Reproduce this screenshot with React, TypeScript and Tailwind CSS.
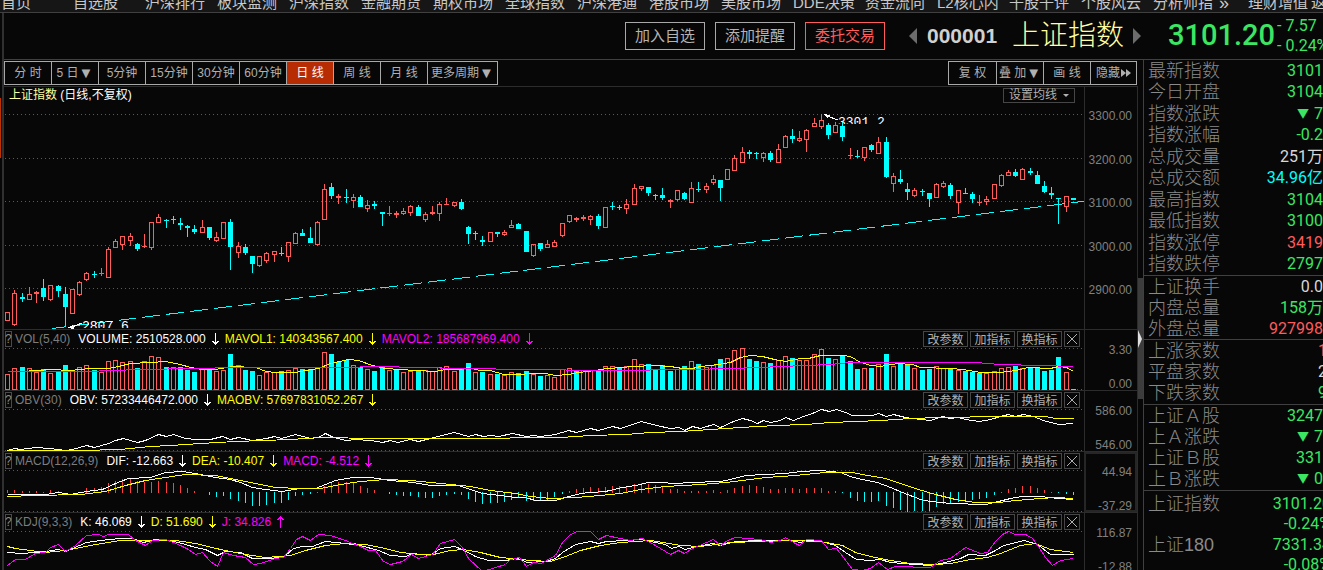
import type { ReactNode } from "react";

const UP = "#ff5c5c";
const DOWN = "#00ffff";

// [rising, high, body top, body bottom, low], as y positions on the chart
const candles: number[][] = [
  [1, 312, 312, 321, 321], [1, 290, 293, 325, 326], [0, 293, 297, 299, 302], [1, 287, 294, 300, 300], [1, 291, 292, 294, 303],
  [0, 279, 288, 297, 301], [1, 285, 285, 300, 301], [0, 285, 286, 291, 297], [0, 287, 294, 307, 327], [1, 289, 289, 314, 314],
  [1, 281, 282, 295, 296], [1, 272, 273, 280, 281], [0, 271, 274, 275, 278], [1, 268, 273, 274, 276], [1, 247, 249, 278, 278],
  [1, 239, 241, 248, 248], [1, 236, 236, 245, 250], [1, 233, 236, 241, 246], [0, 243, 244, 249, 251], [1, 234, 246, 247, 248],
  [1, 222, 222, 248, 250], [1, 214, 217, 223, 223], [0, 219, 220, 221, 228], [0, 216, 219, 220, 224], [0, 218, 223, 225, 230],
  [0, 225, 226, 228, 237], [0, 225, 229, 232, 234], [1, 220, 227, 233, 233], [0, 227, 227, 238, 240], [1, 232, 237, 241, 242],
  [1, 222, 222, 239, 239], [0, 219, 222, 247, 270], [1, 242, 246, 253, 258], [0, 244, 247, 253, 255], [0, 256, 256, 264, 273],
  [1, 256, 256, 266, 267], [1, 252, 253, 261, 263], [1, 251, 251, 255, 262], [0, 247, 253, 254, 256], [1, 242, 242, 257, 262],
  [1, 232, 233, 244, 244], [0, 229, 233, 236, 236], [0, 227, 238, 243, 243], [1, 221, 222, 245, 246], [1, 184, 189, 220, 220],
  [0, 183, 187, 196, 199], [1, 194, 196, 198, 204], [0, 189, 197, 198, 203], [1, 194, 197, 201, 208], [0, 195, 197, 207, 207],
  [1, 200, 205, 209, 212], [0, 201, 204, 206, 209], [0, 212, 212, 214, 226], [1, 206, 213, 214, 216], [1, 211, 213, 215, 218],
  [1, 208, 211, 214, 215], [1, 205, 206, 213, 216], [0, 205, 207, 216, 216], [1, 212, 214, 220, 222], [1, 206, 212, 214, 215],
  [1, 202, 204, 214, 221], [1, 198, 204, 205, 205], [1, 202, 202, 206, 207], [0, 199, 202, 209, 210], [0, 226, 227, 234, 244],
  [0, 231, 233, 234, 240], [0, 236, 240, 242, 246], [1, 232, 232, 242, 242], [0, 232, 232, 234, 237], [1, 230, 232, 235, 236],
  [1, 220, 225, 228, 228], [0, 223, 224, 229, 229], [0, 231, 231, 252, 252], [1, 244, 244, 256, 257], [0, 243, 243, 249, 251],
  [1, 240, 244, 248, 248], [1, 240, 242, 247, 247], [1, 223, 223, 236, 237], [1, 215, 215, 222, 223], [1, 217, 218, 220, 222],
  [1, 215, 217, 219, 221], [1, 215, 216, 220, 225], [0, 214, 216, 226, 229], [1, 207, 207, 228, 228], [0, 202, 206, 207, 210],
  [0, 205, 207, 208, 210], [1, 199, 204, 209, 214], [1, 184, 188, 205, 205], [1, 186, 186, 189, 191], [0, 187, 187, 193, 196],
  [0, 194, 195, 196, 200], [0, 188, 195, 198, 200], [1, 199, 200, 202, 208], [1, 190, 190, 200, 201], [0, 192, 193, 199, 200],
  [1, 182, 188, 203, 203], [0, 182, 189, 190, 192], [1, 183, 186, 190, 193], [1, 175, 179, 183, 185], [0, 180, 180, 188, 201],
  [1, 169, 169, 180, 180], [1, 155, 158, 171, 171], [1, 147, 152, 163, 163], [0, 150, 152, 154, 159], [0, 152, 153, 154, 159],
  [1, 152, 153, 158, 162], [0, 151, 153, 160, 162], [1, 144, 149, 163, 163], [1, 135, 136, 148, 148], [0, 129, 136, 139, 143],
  [1, 131, 138, 141, 142], [1, 129, 130, 140, 152], [1, 118, 123, 127, 127], [1, 114, 120, 127, 129], [0, 123, 125, 135, 139],
  [1, 122, 125, 133, 133], [0, 122, 126, 137, 141], [1, 148, 155, 156, 159], [0, 150, 156, 157, 158], [1, 147, 147, 158, 161],
  [0, 144, 145, 150, 152], [1, 137, 142, 154, 154], [0, 137, 142, 177, 178], [1, 173, 176, 184, 192], [0, 170, 179, 182, 184],
  [0, 183, 189, 192, 200], [1, 188, 190, 196, 197], [0, 189, 191, 192, 196], [0, 193, 193, 199, 207], [1, 183, 184, 198, 198],
  [1, 181, 183, 187, 188], [0, 183, 185, 196, 199], [1, 190, 190, 203, 214], [0, 188, 193, 194, 194], [0, 192, 194, 199, 203],
  [1, 195, 202, 203, 206], [1, 196, 199, 202, 205], [1, 184, 184, 199, 199], [1, 174, 175, 186, 187], [1, 170, 172, 176, 176],
  [0, 169, 172, 176, 177], [1, 168, 169, 180, 180], [0, 168, 171, 173, 175], [0, 171, 175, 184, 184], [0, 181, 186, 192, 193],
  [0, 187, 193, 195, 199], [0, 198, 198, 199, 224], [1, 196, 196, 207, 212], [0, 198, 198, 200, 200],
];

// top of each volume bar
const volumes = [
  374, 368, 367, 368, 372, 369, 373, 371, 365, 371, 367, 365, 370, 372, 361, 360, 362, 361, 368, 361,
  356, 357, 367, 367, 367, 370, 372, 369, 369, 371, 370, 354, 365, 370, 371, 375, 372, 372, 371, 370,
  368, 369, 369, 368, 352, 354, 362, 360, 365, 367, 369, 371, 367, 370, 370, 372, 371, 370, 370, 371,
  367, 366, 371, 369, 363, 372, 372, 374, 374, 375, 372, 373, 371, 374, 376, 375, 377, 369, 368, 371,
  370, 370, 370, 366, 366, 368, 366, 359, 364, 364, 369, 365, 371, 369, 366, 361, 364, 367, 365, 359,
  358, 350, 348, 359, 361, 362, 363, 360, 356, 358, 360, 360, 354, 349, 358, 359, 355, 361, 369, 368,
  368, 364, 354, 366, 363, 365, 368, 370, 369, 366, 368, 368, 370, 371, 372, 373, 373, 371, 368, 367,
  366, 368, 367, 368, 371, 370, 357, 372, 389,
];

// days whose volume colour is the opposite of the candle's
const flipped = new Set([23, 46, 54, 65, 79, 84, 92, 117, 135]);

const macdBars = [
  3, 3, 2, 2, 2, 1, 3, 2, 0, 0, 1, 5, 5, 6, 10, 12, 14, 14, 12, 11,
  11, 12, 11, 10, 8, 5, 2, 0, -3, -5, -4, -7, -9, -11, -14, -14, -13, -11, -11, -8,
  -4, -3, -2, 1, 7, 10, 11, 11, 10, 7, 5, 3, 0, -2, -3, -4, -4, -5, -6, -6,
  -4, -3, -2, -3, -7, -10, -12, -11, -11, -10, -8, -6, -9, -9, -9, -8, -5, -2, 2, 4,
  5, 6, 5, 6, 7, 7, 7, 9, 10, 9, 8, 6, 4, 4, 2, 2, 2, 2, 3, 1,
  3, 5, 7, 8, 7, 6, 4, 4, 5, 5, 4, 5, 5, 5, 2, 2, -1, -6, -9, -10,
  -10, -9, -14, -16, -18, -20, -19, -19, -19, -15, -12, -11, -10, -9, -8, -7, -6, -3, 1, 4,
  5, 7, 7, 5, 3, 1, -1, -2, -3,
];

const lines = {
  mavol1: "7,371 20,371 38,370 50,369 70,370 90,368 108,368 118,366 130,363 150,362 165,361 180,364 190,367 202,369 215,369 232,366 255,367 266,371 275,372 295,372 305,370 318,368 330,363 348,359 358,360 372,365 385,368 400,369 415,370 435,371 445,369 460,369 467,367 480,370 490,370 503,374 520,374 530,373 545,373 555,375 568,374 578,372 595,370 607,368 622,367 632,366 655,365 670,366 682,368 692,368 700,366 718,364 730,362 740,357 750,355 762,356 774,359 785,361 800,358 808,358 820,355 845,355 852,357 858,361 870,365 880,366 897,363 912,364 920,367 950,368 963,369 980,372 1000,372 1015,370 1028,367 1050,368 1058,366 1066,367 1073,371",
  mavol2: "7,371 95,371 102,370 150,369 185,368 245,367 330,367 390,366 407,367 470,368 520,369 610,370 690,369 730,368 760,367 780,366 830,364 850,362 975,362 1000,364 1040,365 1073,366",
  obv: "7,450 14,448 20,449 35,447 50,448 65,450 72,449 86,445 94,447 108,443 115,440 123,438 137,442 145,440 158,434 166,436 173,434 185,438 195,439 210,439 222,436 230,439 238,437 252,440 266,438 274,436 281,438 295,434 310,438 318,437 325,433 333,437 346,440 355,439 370,440 382,442 390,440 397,442 410,439 418,441 430,438 445,434 454,432 468,436 475,434 483,436 490,435 498,436 512,433 526,436 533,435 540,436 555,434 568,430 576,432 590,428 598,430 612,426 620,428 632,424 641,421 656,425 670,428 679,427 684,430 692,426 700,428 713,424 720,427 733,421 742,418 750,420 757,423 763,420 770,422 780,420 785,417 793,420 803,416 812,413 821,409 829,411 836,409 845,412 852,415 862,415 872,415 878,413 886,416 893,414 905,417 920,419 930,420 942,416 950,418 958,417 965,419 979,421 990,419 1000,416 1008,414 1015,416 1023,414 1033,416 1043,420 1058,424 1073,423",
  maobv: "7,450 95,450 105,449 120,449 150,446 170,445 200,443 235,441 290,439 320,437 375,438 460,438 560,437 590,435 625,434 650,432 680,431 710,429 740,427 775,425 805,424 830,422 880,420 910,418 940,417 1000,416 1045,416 1055,418 1073,418",
  dif: "7,494 45,494 58,492 70,494 86,491 102,489 115,483 128,478 150,477 165,472 182,471 200,474 215,477 230,479 240,482 252,487 265,489 282,491 300,488 315,488 325,484 335,480 352,477 370,477 390,480 413,482 430,485 458,485 470,489 482,493 500,495 515,497 525,497 535,500 555,500 565,497 580,493 590,492 605,491 622,487 635,485 648,482 660,482 675,483 690,482 720,481 730,479 745,475 765,474 785,473 800,471 820,470 840,472 850,476 857,478 877,482 890,487 902,492 920,499 930,501 950,503 985,504 998,501 1010,498 1022,496 1040,496 1058,498 1073,499",
  dea: "7,496 35,495 80,494 105,491 125,485 145,480 165,477 185,474 215,475 235,479 260,484 275,487 300,488 320,488 340,484 360,481 385,479 410,480 440,483 470,486 490,490 515,493 530,496 550,498 575,497 600,495 620,493 640,489 665,486 700,484 725,482 750,479 765,477 795,475 825,472 852,472 862,474 885,478 900,483 918,489 935,494 955,499 975,502 998,502 1015,500 1040,498 1055,497 1073,498",
  k: "7,552 22,553 45,551 58,549 65,551 86,542 100,540 120,538 132,538 143,542 155,539 170,540 185,544 195,547 205,549 217,555 225,551 240,552 252,558 270,558 284,556 293,548 302,546 312,546 325,541 345,543 360,545 378,550 390,555 405,556 412,553 430,555 440,548 454,546 462,549 475,556 488,560 505,560 517,558 527,562 545,561 555,558 562,552 575,544 590,541 598,543 606,541 625,540 642,539 655,542 665,544 671,548 678,546 685,549 692,547 712,543 720,545 735,541 760,540 790,540 800,542 806,540 821,541 835,545 845,552 856,559 870,560 880,559 890,562 915,564 930,565 945,562 960,558 968,554 985,555 995,550 1003,545 1024,540 1037,544 1050,554 1073,554",
  d: "7,546 15,548 45,552 65,550 90,545 120,540 140,540 175,540 195,543 220,549 245,554 265,557 290,555 305,550 325,545 345,543 365,544 385,548 400,552 420,554 433,554 450,550 463,549 480,552 500,557 530,560 550,561 565,556 580,550 600,545 620,542 650,540 680,545 700,546 730,542 760,541 790,540 820,541 842,545 855,552 870,556 890,560 910,563 935,564 950,563 970,559 987,557 1000,553 1020,545 1035,543 1050,549 1073,552",
  j: "7,565 15,559 25,559 35,553 45,552 50,547 58,544 65,551 75,545 86,535 98,534 103,536 108,534 128,534 135,540 145,545 152,540 165,539 173,542 180,545 188,549 195,554 202,552 210,561 217,566 223,552 233,555 245,557 253,564 260,563 275,558 283,557 290,548 296,539 302,536 310,540 318,534 330,535 345,540 352,543 360,546 368,550 375,550 383,561 390,564 402,561 411,554 418,558 432,554 440,543 454,539 462,547 468,558 482,571 505,564 510,559 519,557 526,566 533,562 541,563 555,555 562,542 570,534 577,531 590,531 598,539 606,535 620,538 630,540 642,538 655,545 670,554 678,550 684,553 692,548 713,539 720,545 727,540 735,537 760,539 770,542 780,540 785,537 793,542 799,545 806,539 821,540 828,549 836,548 843,557 852,569 862,570 870,568 878,562 887,569 895,566 930,567 940,560 950,558 965,547 980,553 987,552 995,541 1002,534 1008,531 1015,534 1025,534 1032,538 1038,546 1045,557 1052,565 1060,560 1073,558",
};

const navItems = [
  "首页", "自选股", "沪深排行", "板块监测", "沪深指数", "金融期货", "期权市场", "全球指数", "沪深港通",
  "港股市场", "美股市场", "DDE决策", "资金流向", "L2核心内", "千股千评", "个股风云",
];

interface Quote {
  label: string;
  value: string;
  color: string;
  down?: boolean;
}

const GREEN = "text-[#3ce662]";
const RED = "text-[#ff5c5c]";
const WHITE = "text-[#d8d8d8]";

const quoteGroups: { className: string; rows: Quote[] }[] = [
  {
    className: "h-[216px]",
    rows: [
      { label: "最新指数", value: "3101", color: GREEN },
      { label: "今日开盘", value: "3104", color: GREEN },
      { label: "指数涨跌", value: "7", color: GREEN, down: true },
      { label: "指数涨幅", value: "-0.2", color: GREEN },
      { label: "总成交量", value: "251万", color: WHITE },
      { label: "总成交额", value: "34.96亿", color: "text-[#00ffff]" },
      { label: "最高指数", value: "3104", color: GREEN },
      { label: "最低指数", value: "3100", color: GREEN },
      { label: "指数涨停", value: "3419", color: RED },
      { label: "指数跌停", value: "2797", color: GREEN },
    ],
  },
  {
    className: "h-[64px]",
    rows: [
      { label: "上证换手", value: "0.0", color: WHITE },
      { label: "内盘总量", value: "158万", color: GREEN },
      { label: "外盘总量", value: "927998", color: RED },
    ],
  },
  {
    className: "h-[65px] [&_dd]:-mr-1",
    rows: [
      { label: "上涨家数", value: "1", color: RED },
      { label: "平盘家数", value: "2", color: WHITE },
      { label: "下跌家数", value: "9", color: GREEN },
    ],
  },
  {
    className: "h-[86px]",
    rows: [
      { label: "上证Ａ股", value: "3247", color: GREEN },
      { label: "上Ａ涨跌", value: "7", color: GREEN, down: true },
      { label: "上证Ｂ股", value: "331", color: GREEN },
      { label: "上Ｂ涨跌", value: "0", color: GREEN, down: true },
    ],
  },
  {
    className: "h-[84px] pt-[3px] [&_dd]:-mr-2",
    rows: [
      { label: "上证指数", value: "3101.20", color: GREEN },
      { label: "", value: "-0.24%", color: GREEN },
      { label: "上证180", value: "7331.34", color: GREEN },
      { label: "", value: "-0.08%", color: GREEN },
    ],
  },
];

const barX = (i: number) => Math.floor(7.7 + 7.2 * i);

function Grid({ y }: { y: number }) {
  return <line x1={5} x2={1084} y1={y + 0.5} y2={y + 0.5} stroke="#5a5a5a" strokeDasharray="1 3" />;
}

function Curve({ points, color }: { points: string; color: string }) {
  return <polyline points={points} fill="none" stroke={color} transform="translate(0.5 0.5)" />;
}

function Bar({ x, top, bottom, up }: { x: number; top: number; bottom: number; up: boolean }) {
  if (up && bottom - top > 2) {
    return <rect x={x - 1.5} y={top + 0.5} width={4} height={bottom - top - 1} fill="none" stroke={UP} />;
  }
  return <rect x={x - 2} y={top} width={5} height={bottom - top} fill={up ? UP : DOWN} />;
}

function PriceChart() {
  return (
    <svg viewBox="4 104 1080 225" preserveAspectRatio="none" className="block h-[225px] w-full" shapeRendering="crispEdges">
      {[114, 158, 201, 245, 288].map((y) => (
        <Grid key={y} y={y} />
      ))}
      {candles.map(([rising, high, top, bottom, low], i) => {
        const x = barX(i);
        const color = rising ? UP : DOWN;
        return (
          <g key={i}>
            <rect x={x} y={high} width={1} height={top - high} fill={color} />
            <rect x={x} y={bottom} width={1} height={low - bottom} fill={color} />
            <Bar x={x} top={top} bottom={bottom} up={rising === 1} />
          </g>
        );
      })}
      <line x1={52} y1={328.5} x2={1084} y2={201.3} stroke={DOWN} strokeDasharray="18 6" strokeDashoffset={5} />
      {/* lowest and highest price marks */}
      <path d="M67 328 L73 325 L74 329 Z" fill="#fff" />
      <path d="M72 327 L82 323" stroke="#fff" />
      <svg x={82} y={318} width={60} height={10}>
        <text x={0} y={12} fill="#fff" fontSize={13} fontFamily="Liberation Mono, monospace">2807.6</text>
      </svg>
      <path d="M823 114 L830 115 L827 118 Z" fill="#fff" />
      <path d="M827 116 L838 120" stroke="#fff" />
      <svg x={838} y={114} width={60} height={10}>
        <text x={0} y={12} fill="#fff" fontSize={13} fontFamily="Liberation Mono, monospace">3301.2</text>
      </svg>
    </svg>
  );
}

function SubChart({ top, children }: { top: number; children: ReactNode }) {
  return (
    <svg viewBox={`4 ${top} 1080 42`} preserveAspectRatio="none" className="block h-[42px] w-full" shapeRendering="crispEdges">
      <Grid y={top} />
      <Grid y={top + 41} />
      {children}
    </svg>
  );
}

function Arrow({ up }: { up?: boolean }) {
  return (
    <svg viewBox="0 0 7 12" className="mx-[6px] h-3 w-[7px] shrink-0" fill="none" stroke="currentColor" shapeRendering="crispEdges">
      <path d={up ? "M3.5 12 V1 M0.5 4 L3.5 1 L6.5 4" : "M3.5 0 V11 M0.5 8 L3.5 11 L6.5 8"} />
    </svg>
  );
}

interface Reading {
  text: string;
  color: string;
  up?: boolean;
}

interface IndicatorProps {
  name: string;
  readings: Reading[];
  scale: string[];
  selected?: boolean;
  children: ReactNode;
}

function Indicator({ name, readings, scale, selected, children }: IndicatorProps) {
  return (
    <section className="flex h-[61px] shrink-0 border-t border-[#2c2c2c]">
      <div className="min-w-0 flex-1">
        <div className="flex h-[18px] items-center pl-px pr-1 text-[12px] leading-4 whitespace-nowrap">
          <button className="h-4 w-[7px] border border-[#4a4a4a] text-[#8a8a8a]">
            <span className="-ml-px block leading-[14px]">?</span>
          </button>
          <h2 className="ml-[3px] mr-2 text-[#7d7d7d]">{name}</h2>
          {readings.map((r) => (
            <span key={r.text} className={`flex items-center ${r.color}`}>
              {r.text}
              <Arrow up={r.up} />
            </span>
          ))}
          <div className="ml-auto flex gap-[2px] text-[#b0b0b0]">
            {["改参数", "加指标", "换指标"].map((t) => (
              <button key={t} className="h-4 w-[45px] border border-[#464646] leading-4">{t}</button>
            ))}
            <button aria-label="关闭" className="flex h-4 w-4 items-center justify-center border border-[#464646]">
              <svg viewBox="0 0 10 10" className="size-[10px]" stroke="currentColor" shapeRendering="crispEdges">
                <path d="M0 0 L10 10 M10 0 L0 10" />
              </svg>
            </button>
          </div>
        </div>
        {children}
      </div>
      <div
        className={`flex w-[53px] flex-col justify-between border-l border-[#2c2c2c] pr-[5px] pt-[14px] text-right text-[12px] leading-3 text-[#808080] ${
          selected ? "outline-2 -outline-offset-2 outline-[#262626]" : ""
        }`}
      >
        {scale.map((s) => (
          <span key={s}>{s}</span>
        ))}
      </div>
    </section>
  );
}

function Header() {
  return (
    <header className="flex h-[47px] shrink-0 items-center justify-end border-b border-[#404040] whitespace-nowrap">
      <div className="flex gap-[10px] text-[15px] text-[#b4b4b4]">
        <button className="h-7 w-20 border border-[#a8a8a8] leading-6">加入自选</button>
        <button className="h-7 w-20 border border-[#a8a8a8] leading-6">添加提醒</button>
        <button className="h-7 w-20 border border-[#ff5c5c] leading-6 text-[#ff5c5c]">委托交易</button>
      </div>
      <button aria-label="上一个" className="ml-6">
        <svg viewBox="0 0 8 16" className="h-4 w-2" fill="#6c6c6c"><path d="M8 0 V16 L0 8 Z" /></svg>
      </button>
      <span className="ml-[10px] w-[72px] text-[21px] font-bold text-[#d0d0d0]">000001</span>
      <h1 className="ml-[13px] w-28 text-[28px] leading-10 font-light text-[#ffffa0]">上证指数</h1>
      <button aria-label="下一个" className="ml-[9px]">
        <svg viewBox="0 0 8 16" className="h-4 w-2" fill="#6c6c6c"><path d="M0 0 V16 L8 8 Z" /></svg>
      </button>
      <span className="ml-[27px] w-[104px] font-[Roboto] text-[29px] font-medium text-[#3ce662]">3101.20</span>
      <div className="ml-[5px] w-[46px] overflow-hidden font-[Roboto] text-[16px] leading-5 text-[#3ce662]">
        <div className="flex gap-1"><span>-</span>7.57</div>
        <div className="flex gap-1"><span>-</span>0.24%</div>
      </div>
    </header>
  );
}

const Caret = () => <span className="text-[15px] leading-3">▼</span>;

function Toolbar() {
  return (
    <div className="flex h-[27px] shrink-0 justify-between border-b border-[#2c2c2c] pt-px pr-px text-[12px] text-[#b0b0b0] whitespace-nowrap">
      <div className="flex h-6 divide-x divide-[#a8a8a8] border border-[#a8a8a8]">
        <button className="w-[47px]">分 时</button>
        <button className="flex w-[47px] items-center justify-center">5 日<Caret /></button>
        <button className="w-[47px]">5分钟</button>
        <button className="w-[47px]">15分钟</button>
        <button className="w-[47px]">30分钟</button>
        <button className="w-[47px]">60分钟</button>
        <button className="w-[47px] bg-[#b82c04] text-white">日 线</button>
        <button className="w-[47px]">周 线</button>
        <button className="w-[47px]">月 线</button>
        <button className="flex w-[69px] items-center justify-center">更多周期<Caret /></button>
      </div>
      <div className="flex h-6 divide-x divide-[#a8a8a8] border border-[#a8a8a8]">
        <button className="w-12">复 权</button>
        <button className="flex w-[47px] items-center justify-center">叠 加<Caret /></button>
        <button className="w-[47px]">画 线</button>
        <button className="flex w-[45px] items-center justify-center gap-px">
          隐藏
          <svg viewBox="0 0 10 8" className="h-2 w-[10px]" fill="currentColor"><path d="M0 0 L5 4 L0 8 Z M5 0 L10 4 L5 8 Z" /></svg>
        </button>
      </div>
    </div>
  );
}

export default function App() {
  return (
    <div className="flex h-screen flex-col overflow-hidden bg-[#070707] font-['Liberation_Sans','Noto_Sans_CJK_SC',sans-serif]">
      <nav className="flex h-[13px] shrink-0 overflow-hidden border-b border-[#404040] bg-[#161616] pl-px text-[15px] text-[#c8c8c8] whitespace-nowrap">
        <div className="-mt-[9px] flex leading-6">
          {navItems.map((item) => (
            <a key={item} href="#" className="w-[72px] shrink-0">{item}</a>
          ))}
          <a href="#" className="w-[66px] shrink-0">分析师指</a>
          <a href="#" className="w-[29px] shrink-0 text-[18px]">»</a>
          <a href="#" className="w-[63px] shrink-0">理财增值</a>
          <a href="#" className="shrink-0">返</a>
        </div>
      </nav>

      <div className="flex min-h-0 flex-1">
        <div className="w-1 shrink-0 border-r-2 border-[#303030]">
          <div className="mt-[85px] h-[60px] w-px bg-[#c03000]" />
        </div>

        <div className="flex min-w-0 flex-1 flex-col">
          <Header />
          <div className="flex min-h-0 flex-1">
            <main className="flex min-w-0 flex-1 flex-col overflow-hidden">
              <Toolbar />
              <div className="flex min-h-0 flex-1 flex-col border-r border-[#2c2c2c]">
                <section className="flex shrink-0">
                  <div className="min-w-0 flex-1">
                    <div className="flex h-[17px] items-center justify-between pl-[5px] pr-[9px] text-[12px] whitespace-nowrap">
                      <h2 className="leading-[17px] text-white"><span className="text-[#ffffa0]">上证指数</span> (日线,不复权)</h2>
                      <button className="flex h-[15px] w-[72px] items-center justify-center gap-[6px] border border-[#464646] leading-[15px] text-[#b0b0b0]">
                        设置均线
                        <svg viewBox="0 0 6 3" className="h-[3px] w-[6px]" fill="currentColor"><path d="M0 0 H6 L3 3 Z" /></svg>
                      </button>
                    </div>
                    <PriceChart />
                  </div>
                  <div className="w-[53px] border-l border-[#2c2c2c] pr-[5px]">
                    <div className="mt-[21px] flex h-[190px] flex-col justify-between text-right text-[12px] leading-4 text-[#808080]">
                      {["3300.00", "3200.00", "3100.00", "3000.00", "2900.00"].map((p) => (
                        <span key={p}>{p}</span>
                      ))}
                    </div>
                  </div>
                </section>

                <Indicator
                  name="VOL(5,40)"
                  scale={["3.30", "0.00"]}
                  readings={[
                    { text: "VOLUME: 2510528.000", color: "text-white" },
                    { text: "MAVOL1: 140343567.400", color: "text-[#ffff00]" },
                    { text: "MAVOL2: 185687969.400", color: "text-[#ff00ff]" },
                  ]}
                >
                  <SubChart top={348}>
                    {volumes.map((v, i) => (
                      <Bar key={i} x={barX(i)} top={v} bottom={390} up={(candles[i][0] === 1) !== flipped.has(i)} />
                    ))}
                    <Curve points={lines.mavol1} color="#ffff00" />
                    <Curve points={lines.mavol2} color="#ff00ff" />
                  </SubChart>
                </Indicator>

                <Indicator
                  name="OBV(30)"
                  scale={["586.00", "546.00"]}
                  readings={[
                    { text: "OBV: 57233446472.000", color: "text-white" },
                    { text: "MAOBV: 57697831052.267", color: "text-[#ffff00]" },
                  ]}
                >
                  <SubChart top={409}>
                    <Curve points={lines.obv} color="#fff" />
                    <Curve points={lines.maobv} color="#ffff00" />
                  </SubChart>
                </Indicator>

                <Indicator
                  name="MACD(12,26,9)"
                  scale={["44.94", "-37.29"]}
                  selected
                  readings={[
                    { text: "DIF: -12.663", color: "text-white" },
                    { text: "DEA: -10.407", color: "text-[#ffff00]" },
                    { text: "MACD: -4.512", color: "text-[#ff00ff]" },
                  ]}
                >
                  <SubChart top={470}>
                    {macdBars.map((v, i) => (
                      <rect key={i} x={barX(i)} y={v > 0 ? 493 - v : 492} width={1} height={Math.abs(v)} fill={v > 0 ? "#ff4040" : DOWN} />
                    ))}
                    <Curve points={lines.dif} color="#fff" />
                    <Curve points={lines.dea} color="#ffff00" />
                  </SubChart>
                </Indicator>

                <Indicator
                  name="KDJ(9,3,3)"
                  scale={["116.87", "-12.88"]}
                  readings={[
                    { text: "K: 46.069", color: "text-white" },
                    { text: "D: 51.690", color: "text-[#ffff00]" },
                    { text: "J: 34.826", color: "text-[#ff00ff]", up: true },
                  ]}
                >
                  <SubChart top={531}>
                    <Curve points={lines.k} color="#fff" />
                    <Curve points={lines.d} color="#ffff00" />
                    <Curve points={lines.j} color="#ff00ff" />
                  </SubChart>
                </Indicator>
              </div>
            </main>

            {/* splitter */}
            <div className="w-[5px] shrink-0 pt-[218px]">
              <button aria-label="收起" className="flex h-[121px] w-full items-center bg-[#3c3c3c]">
                <svg viewBox="0 0 4 18" className="h-[18px] w-1" fill="#e0e0e0"><path d="M0 0 L4 9 L0 18 Z" /></svg>
              </button>
            </div>

            <aside className="w-[180px] shrink-0 overflow-hidden border-l border-[#404040]">
              {quoteGroups.map((group, i) => (
                <dl key={i} className={`grid auto-rows-fr border-b border-[#404040] pl-1 last:border-b-0 ${group.className}`}>
                  {group.rows.map((q, n) => (
                    <div key={n} className="flex min-h-0 items-center justify-between leading-5 whitespace-nowrap">
                      <dt className="text-[18px] font-light text-[#8a8a8a]">{q.label}</dt>
                      <dd className={`flex items-center gap-[5px] font-[Roboto,'Noto_Sans_CJK_SC'] text-[16px] ${q.color}`}>
                        {q.down && <span className="text-[12px]">▼</span>}
                        {q.value}
                      </dd>
                    </div>
                  ))}
                </dl>
              ))}
            </aside>
          </div>
        </div>
      </div>
    </div>
  );
}
